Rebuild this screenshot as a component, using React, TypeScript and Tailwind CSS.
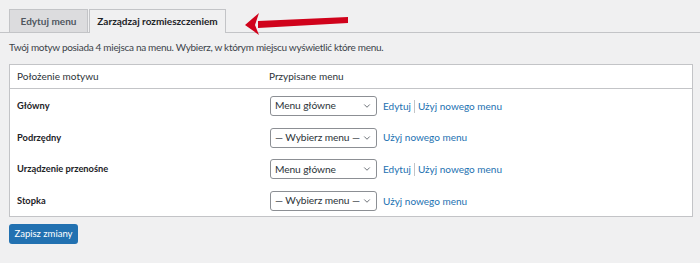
import { ChevronDown } from 'lucide-react'

const rows = [
  { name: 'Główny', value: 'Menu główne', edit: true },
  { name: 'Podrzędny', value: '— Wybierz menu —', edit: false },
  { name: 'Urządzenie przenośne', value: 'Menu główne', edit: true },
  { name: 'Stopka', value: '— Wybierz menu —', edit: false },
]

const Select = ({ value }: { value: string }) => (
  <div className="flex h-[20px] w-[107px] items-center justify-between rounded-[3px] border border-[#8c8f94] bg-white pl-[4px] pr-[4px] text-[10.2px] tracking-[-0.1px] text-[#2c3338]">
    <span className="whitespace-nowrap">{value}</span>
    <ChevronDown className="h-[10px] w-[10px] shrink-0 text-[#50575e]" strokeWidth={2} />
  </div>
)

export default function App() {
  return (
    <div className="h-[263px] w-[700px] overflow-hidden whitespace-nowrap bg-[#f0f0f1] font-['Lato',sans-serif] text-[#3c434a]">
      <div className="relative flex items-end border-b border-[#c3c4c7] pl-[9px] pt-[9px]">
        <div className="flex h-[23px] w-[79px] items-center justify-center border border-b-0 border-[#c3c4c7] bg-[#dcdcde] text-[10px] font-bold text-[#50575e]">
          Edytuj menu
        </div>
        <div className="-mb-px ml-[1px] flex h-[24px] w-[137px] items-center justify-center border border-b-0 border-[#c3c4c7] bg-[#f0f0f1] text-[10px] font-bold text-[#1d2327]">
          Zarządzaj rozmieszczeniem
        </div>
        <svg className="absolute left-[244px] top-[12px]" width="106" height="24" viewBox="0 0 106 24">
          <path d="M14 9 L104 5 L104 11 L14 16 Z" fill="#d0021b" />
          <path d="M1 13 L15 1 L11 13 L15 23 Z" fill="#d0021b" />
        </svg>
      </div>

      <p className="mt-[6px] pl-[9px] text-[10px] leading-[16px] tracking-[-0.3px]">
        Twój motyw posiada 4 miejsca na menu. Wybierz, w którym miejscu wyświetlić które menu.
      </p>

      <div className="ml-[9px] mt-[9px] w-[684px] border border-[#c3c4c7] bg-white">
        <div className="flex h-[24px] items-center border-b border-[#c3c4c7] text-[10px] text-[#2c3338]">
          <div className="w-[259px] pl-[7px]">Położenie motywu</div>
          <div>Przypisane menu</div>
        </div>
        <div className="flex flex-col gap-[11.7px] pb-[5px] pt-[7px]">
          {rows.map((r) => (
            <div key={r.name} className="flex h-[20px] items-center">
              <div className="w-[260px] pl-[7px] text-[9.3px] font-bold text-[#1d2327]">
                {r.name}
              </div>
              <Select value={r.value} />
              <div className="ml-[6px] flex items-center text-[10px] text-[#2271b1]">
                {r.edit && (
                  <>
                    <span>Edytuj</span>
                    <span className="mx-[3px] h-[13px] w-px bg-[#c3c4c7]" />
                  </>
                )}
                <span>Użyj nowego menu</span>
              </div>
            </div>
          ))}
        </div>
      </div>

      <button className="ml-[9px] mt-[7px] flex h-[20px] w-[69px] items-center justify-center rounded-[3px] bg-[#2271b1] text-[9.5px] text-white">
        Zapisz zmiany
      </button>
    </div>
  )
}
